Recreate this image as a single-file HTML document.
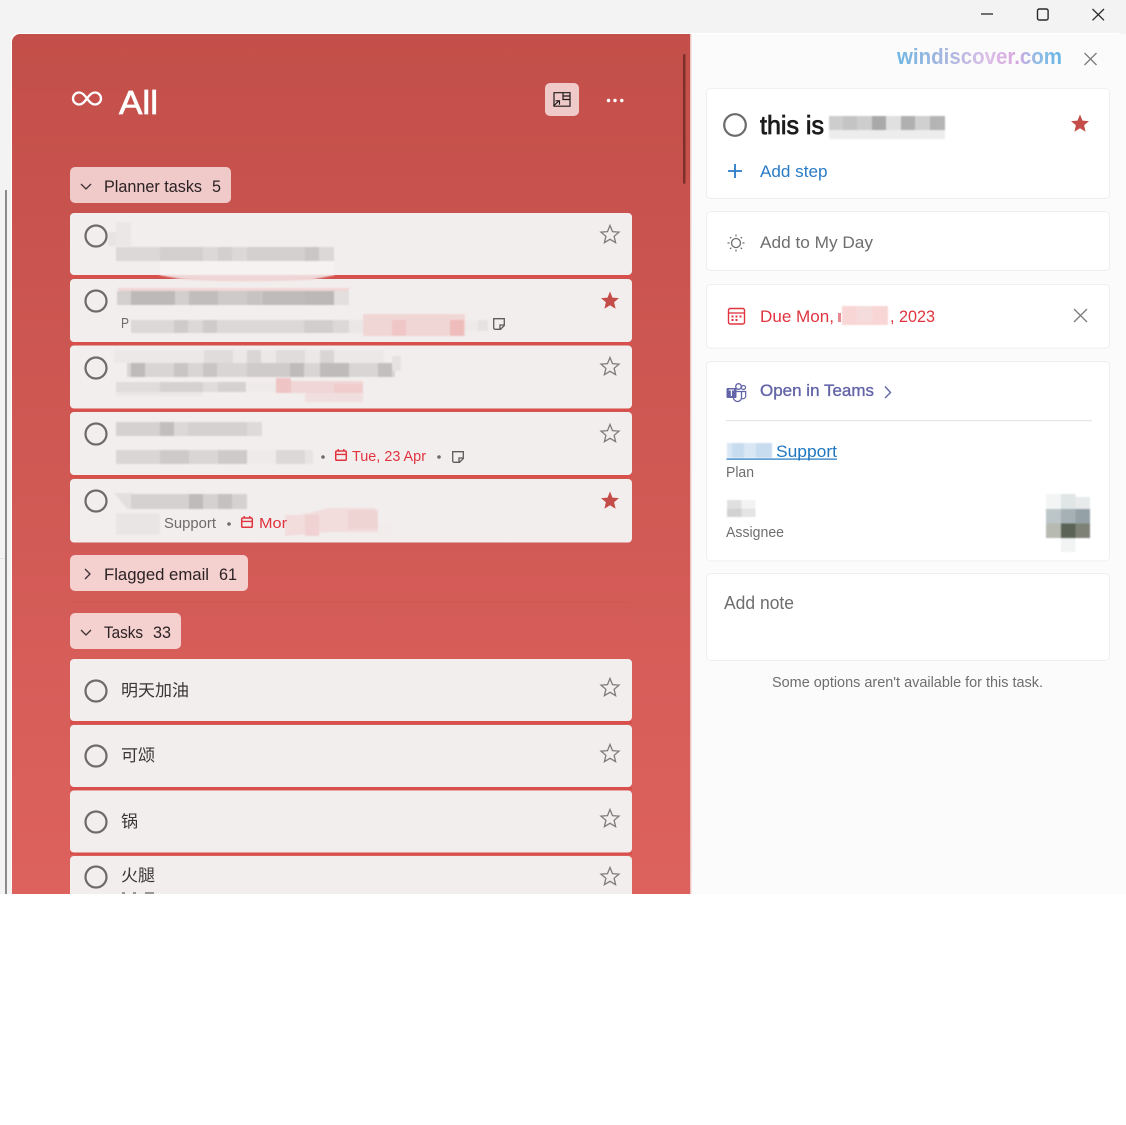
<!DOCTYPE html>
<html lang="en">
<head>
<meta charset="utf-8">
<title>All - Tasks</title>
<style>
html,body{margin:0;padding:0;width:1126px;height:1125px;overflow:hidden;background:#fff}
svg{display:block;position:absolute;left:0;top:0;filter:blur(.35px)}
text{font-family:"Liberation Sans","Noto Sans CJK SC",sans-serif}
.ph{font-size:16.5px;fill:#2b2224}
.sub{font-size:14.5px;fill:#6f6b6b}
.red{fill:#e0343f}
.grey{fill:#6e6e6e}
.cjk{font-size:16.5px;fill:#3a3536}
.mos{filter:blur(.7px)}
</style>
</head>
<body>
<svg width="1126" height="1125" viewBox="0 0 1126 1125" xmlns="http://www.w3.org/2000/svg">
<defs>
<linearGradient id="bg" x1="0" y1="34" x2="0" y2="894" gradientUnits="userSpaceOnUse"><stop offset="0" stop-color="#c34f4a"/><stop offset="1" stop-color="#dd625e"/></linearGradient>
<linearGradient id="wm" x1="897" y1="0" x2="1062" y2="0" gradientUnits="userSpaceOnUse"><stop offset="0" stop-color="#6fb6e2"/><stop offset=".3" stop-color="#a9b6df"/><stop offset=".55" stop-color="#dcc0e8"/><stop offset=".72" stop-color="#d9a6e0"/><stop offset=".85" stop-color="#90bce6"/><stop offset="1" stop-color="#66b6e4"/></linearGradient>
<path id="star" d="M0-9.500 2.500-3.400 9-2.900 4.100 1.300 5.600 7.700 0 4.300-5.600 7.700-4.100 1.300-9-2.900-2.500-3.400Z"/>
<g id="cal"><rect x=".7" y="2" width="10.600" height="9.300" rx="1.200" fill="none" stroke="#e0343f" stroke-width="1.500"/><path d="M.7 5.400H11.300M3.200 0V2.400M8.800 0V2.400" stroke="#e0343f" stroke-width="1.400" fill="none"/></g>
<path id="note" d="M.7.7H11.300V7.500L7.500 11.300H2A1.300 1.300 0 0 1 .7 10ZM11.300 7H7V11.300" fill="none" stroke="#5f5b5b" stroke-width="1.300"/>
</defs>

<!-- window background -->
<rect width="1126" height="894" fill="#f3f3f3"/>
<rect x="5" y="190" width="2" height="704" fill="#8b8b8b"/>
<rect x="0" y="558" width="5" height="1" fill="#e4e4e4"/>
<rect x="11" y="33" width="1115" height="861" rx="8" fill="#fff"/>
<path d="M12 42a8 8 0 0 1 8-8H691V894H12Z" fill="url(#bg)"/>
<rect x="691" y="34" width="435" height="860" fill="#fbfbfb"/>
<rect x="690" y="34" width="1.400" height="860" fill="#ecc4c4"/>

<!-- window controls -->
<path d="M981 14H993" stroke="#2a2a2a" stroke-width="1.300"/>
<rect x="1037.500" y="9" width="10.600" height="11" rx="1.800" fill="none" stroke="#2a2a2a" stroke-width="1.400"/>
<path d="M1092.500 9 1104 20.300M1104 9 1092.500 20.300" stroke="#2a2a2a" stroke-width="1.300"/>

<!-- header -->
<path d="M87 98.500C84 94.500 82 92.500 79 92.500A6 6 0 0 0 79 104.500C82 104.500 84 102.500 87 98.500C90 94.500 92 92.500 95 92.500A6 6 0 0 1 95 104.500C92 104.500 90 102.500 87 98.500Z" fill="none" stroke="#fff" stroke-width="2.300"/>
<text x="119" y="114" font-size="33" fill="#fff" stroke="#fff" stroke-width=".7" textLength="39" lengthAdjust="spacingAndGlyphs">All</text>
<rect x="545" y="83" width="34" height="33" rx="5" fill="#f0c9c9"/>
<path d="M554 92.700H570V106.200H554ZM563 92.700V99.500H570M563 96H570" fill="none" stroke="#1f1a1a" stroke-width="1.200"/>
<path d="M553.500 106 559 100.800M555.500 100.800H559.500V104.800" fill="none" stroke="#1f1a1a" stroke-width="1.100"/>
<g fill="#fff"><circle cx="608.500" cy="100.500" r="1.700"/><circle cx="615" cy="100.500" r="1.700"/><circle cx="621.800" cy="100.500" r="1.700"/></g>
<rect x="683" y="54" width="2.500" height="130" rx="1.200" fill="#7d2f2c"/>

<!-- section pills -->
<rect x="70" y="167" width="161" height="36" rx="5" fill="#f0c9c9"/>
<path d="M81 184 86 189 91 184" fill="none" stroke="#3b3031" stroke-width="1.300"/>
<text x="104" y="192" class="ph" textLength="98" lengthAdjust="spacingAndGlyphs">Planner tasks</text>
<text x="212" y="192" class="ph" textLength="9" lengthAdjust="spacingAndGlyphs">5</text>

<rect x="70" y="555" width="178" height="36" rx="5" fill="#f4d0cf"/>
<path d="M85 569 90 574 85 579" fill="none" stroke="#3b3031" stroke-width="1.300"/>
<text x="104" y="580" class="ph" textLength="105" lengthAdjust="spacingAndGlyphs">Flagged email</text>
<text x="219" y="580" class="ph" textLength="18" lengthAdjust="spacingAndGlyphs">61</text>
<rect x="71" y="602" width="559" height="1" fill="#c95a56"/>

<rect x="70" y="613" width="111" height="36" rx="5" fill="#f4d0cf"/>
<path d="M81 630 86 635 91 630" fill="none" stroke="#3b3031" stroke-width="1.300"/>
<text x="104" y="638" class="ph" textLength="39" lengthAdjust="spacingAndGlyphs">Tasks</text>
<text x="153" y="638" class="ph" textLength="18" lengthAdjust="spacingAndGlyphs">33</text>

<!-- task cards: red separators then cards -->
<g fill="#d94f4b">
<rect x="70" y="275" width="562" height="3"/><rect x="70" y="342" width="562" height="3"/><rect x="70" y="408" width="562" height="3"/><rect x="70" y="475" width="562" height="3"/>
<rect x="70" y="721" width="562" height="3"/><rect x="70" y="787" width="562" height="3"/><rect x="70" y="852" width="562" height="3"/>
</g>
<g fill="#f3eeee">
<rect x="70" y="213" width="562" height="62" rx="4"/>
<rect x="70" y="279" width="562" height="63" rx="4"/>
<rect x="70" y="345.500" width="562" height="63" rx="4"/>
<rect x="70" y="412" width="562" height="63" rx="4"/>
<rect x="70" y="479" width="562" height="63.500" rx="4"/>
<rect x="70" y="659" width="562" height="62" rx="4"/>
<rect x="70" y="725" width="562" height="62" rx="4"/>
<rect x="70" y="790.500" width="562" height="62" rx="4"/>
<path d="M70 894V860a4 4 0 0 1 4-4H628a4 4 0 0 1 4 4V894Z"/>
</g>

<g class="mos">
<!-- mosaics: card 1 -->
<rect x="108" y="232" width="8" height="14" fill="#e8e4e4"/><rect x="116" y="222" width="15" height="24" fill="#ebe7e7"/>
<rect x="116" y="247" width="218" height="14" fill="#dcd8d8"/>
<g fill="#d3cfcf"><rect x="160" y="247" width="43" height="14"/><rect x="218" y="247" width="14" height="14"/><rect x="247" y="247" width="58" height="14"/></g>
<rect x="305" y="247" width="14" height="14" fill="#cbc6c6"/>
<rect x="160" y="261" width="174" height="14" fill="#f6f2f2"/>
<path d="M158 275H336L310 280C260 282 190 282 175 278Z" fill="#efd5d5"/>
<!-- card 2 -->
<path d="M117 288H350L348 291.500H120Z" fill="#f1d5d5"/>
<rect x="117" y="291" width="232" height="14" fill="#e3dfdf"/>
<rect x="117" y="291" width="14" height="14" fill="#d3cfcf"/>
<rect x="131" y="291" width="44" height="14" fill="#bdb9b9"/>
<rect x="175" y="291" width="14" height="14" fill="#d3cfcf"/>
<rect x="189" y="291" width="29" height="14" fill="#c1bdbd"/>
<rect x="218" y="291" width="29" height="14" fill="#cecaca"/>
<rect x="247" y="291" width="14" height="14" fill="#c7c3c3"/>
<rect x="261" y="291" width="14" height="14" fill="#d0cccc"/>
<rect x="262" y="291" width="43" height="14" fill="#bfbbbb"/>
<rect x="305" y="291" width="29" height="14" fill="#bcb8b8"/>
<rect x="131" y="320" width="219" height="13" fill="#dcd8d8"/>
<rect x="174" y="320" width="14" height="13" fill="#cfcbcb"/><rect x="203" y="320" width="14" height="13" fill="#cfcbcb"/><rect x="304" y="320" width="29" height="13" fill="#d2cece"/>
<rect x="349" y="320" width="14" height="13" fill="#ebe7e7"/>
<rect x="363" y="314" width="102" height="22" fill="#f1d6d6"/>
<rect x="392" y="320" width="14" height="16" fill="#f0c6c6"/><rect x="450" y="320" width="14" height="16" fill="#efbcbc"/>
<rect x="465" y="320" width="14" height="11" fill="#efeaea"/><rect x="478" y="320" width="10" height="11" fill="#e6e2e2"/>
<!-- card 3 -->
<rect x="114" y="350" width="270" height="13" fill="#ece8e8"/>
<rect x="204" y="350" width="29" height="13" fill="#e0dcdc"/><rect x="247" y="350" width="14" height="13" fill="#dad6d6"/><rect x="276" y="350" width="29" height="13" fill="#e0dcdc"/><rect x="320" y="350" width="14" height="13" fill="#d9d5d5"/>
<rect x="127" y="363" width="268" height="14" fill="#d9d5d5"/>
<rect x="131" y="363" width="14" height="14" fill="#bebaba"/>
<rect x="174" y="363" width="14" height="14" fill="#c9c5c5"/><rect x="203" y="363" width="14" height="14" fill="#c9c5c5"/>
<rect x="247" y="363" width="43" height="14" fill="#cfcbcb"/>
<rect x="290" y="363" width="14" height="14" fill="#bfbbbb"/>
<rect x="320" y="363" width="29" height="14" fill="#bfbbbb"/>
<rect x="378" y="363" width="14" height="14" fill="#c3bfbf"/>
<rect x="392" y="356" width="9" height="15" fill="#e6e2e2"/>
<rect x="116" y="382" width="130" height="10" fill="#e0dcdc"/>
<rect x="160" y="382" width="43" height="10" fill="#d5d1d1"/><rect x="218" y="382" width="28" height="10" fill="#d5d1d1"/>
<rect x="116" y="392" width="87" height="4" fill="#ebe7e7"/>
<rect x="247" y="382" width="29" height="10" fill="#efeaea"/>
<rect x="276" y="378" width="15" height="15" fill="#efc4c4"/>
<rect x="291" y="381" width="72" height="12" fill="#f0d6d6"/><rect x="334" y="384" width="29" height="9" fill="#f0cccc"/>
<rect x="305" y="393" width="58" height="9" fill="#f1dfdf"/>
<!-- card 4 -->
<rect x="116" y="422" width="146" height="14" fill="#d5d1d1"/>
<rect x="160" y="422" width="14" height="14" fill="#c2bebe"/><rect x="174" y="422" width="14" height="14" fill="#dcd8d8"/><rect x="247" y="422" width="15" height="14" fill="#dedada"/>
<rect x="116" y="450" width="131" height="14" fill="#dad6d6"/>
<rect x="160" y="450" width="29" height="14" fill="#cecaca"/><rect x="218" y="450" width="29" height="14" fill="#cecaca"/>
<rect x="247" y="450" width="29" height="14" fill="#efeaea"/>
<rect x="276" y="450" width="29" height="14" fill="#dcd8d8"/><rect x="305" y="450" width="8" height="14" fill="#e8e4e4"/>
<!-- card 5 -->
<path d="M114 493H131V509H127Z" fill="#e3dfdf"/>
<rect x="131" y="494" width="116" height="15" fill="#d5d1d1"/>
<rect x="189" y="494" width="14" height="15" fill="#bfbbbb"/><rect x="218" y="494" width="14" height="15" fill="#c5c1c1"/>
<rect x="116" y="513" width="44" height="22" fill="#e9e5e5"/>
<path d="M285 515H300L330 508H375L378 532H330L285 536Z" fill="#f2dcdc"/>
<rect x="305" y="515" width="14" height="21" fill="#f0d2d2"/><rect x="348" y="510" width="30" height="19" fill="#efd4d4"/>
<rect x="378" y="525" width="15" height="10" fill="#f2ecec"/>
</g>

<!-- task circles -->
<g fill="none" stroke="#6e6a6a" stroke-width="2.200">
<circle cx="96" cy="236" r="10.500"/><circle cx="96" cy="301" r="10.500"/><circle cx="96" cy="368" r="10.500"/><circle cx="96" cy="434" r="10.500"/><circle cx="96" cy="501" r="10.500"/>
<circle cx="96" cy="691" r="10.500"/><circle cx="96" cy="756" r="10.500"/><circle cx="96" cy="822" r="10.500"/><circle cx="96" cy="877" r="10.500"/>
</g>

<!-- stars -->
<g fill="none" stroke="#7f7b7b" stroke-width="1.300">
<use href="#star" x="610" y="235"/><use href="#star" x="610" y="367"/><use href="#star" x="610" y="434"/><use href="#star" x="610" y="688"/><use href="#star" x="610" y="754"/><use href="#star" x="610" y="819"/><use href="#star" x="610" y="877"/>
</g>
<g fill="#c44d4a"><use href="#star" x="610" y="301"/><use href="#star" x="610" y="501"/></g>

<!-- task meta -->
<text x="121" y="328" class="sub" textLength="8" lengthAdjust="spacingAndGlyphs">P</text>
<use href="#note" x="493" y="318"/>
<circle cx="323" cy="457" r="1.800" fill="#6f6b6b"/>
<use href="#cal" x="335" y="449"/>
<text x="352" y="461" class="sub red" textLength="74" lengthAdjust="spacingAndGlyphs">Tue, 23 Apr</text>
<circle cx="439" cy="457" r="1.800" fill="#6f6b6b"/>
<use href="#note" x="452" y="451"/>
<text x="164" y="528" class="sub" textLength="52" lengthAdjust="spacingAndGlyphs">Support</text>
<circle cx="229" cy="524" r="1.800" fill="#6f6b6b"/>
<use href="#cal" x="241" y="516"/>
<text x="259" y="528" class="sub red" textLength="28" lengthAdjust="spacingAndGlyphs">Mor</text>

<!-- Chinese tasks -->
<text x="121" y="696" class="cjk" textLength="68" lengthAdjust="spacingAndGlyphs">明天加油</text>
<text x="121" y="761" class="cjk" textLength="34" lengthAdjust="spacingAndGlyphs">可颂</text>
<text x="121" y="827" class="cjk" textLength="17" lengthAdjust="spacingAndGlyphs">锅</text>
<text x="121" y="881" class="cjk" textLength="34" lengthAdjust="spacingAndGlyphs">火腿</text>
<g fill="#9a9696"><rect x="122" y="892" width="3" height="2"/><rect x="133" y="892" width="3" height="2"/><rect x="145" y="892" width="9" height="2"/></g>

<!-- detail pane -->
<text x="897" y="64" font-size="22" font-weight="700" fill="url(#wm)" textLength="165" lengthAdjust="spacingAndGlyphs">windiscover.com</text>
<path d="M1084.500 53 1096.500 65M1096.500 53 1084.500 65" stroke="#7c7c7c" stroke-width="1.300"/>

<g fill="#fff" stroke="#efefef">
<rect x="706.500" y="88.500" width="403" height="110" rx="4"/>
<rect x="706.500" y="211.500" width="403" height="59" rx="4"/>
<rect x="706.500" y="284.500" width="403" height="63.500" rx="4"/>
<rect x="706.500" y="361.500" width="403" height="199.500" rx="4"/>
<rect x="706.500" y="573.500" width="403" height="87" rx="4"/>
</g>

<circle cx="735" cy="125" r="10.800" fill="none" stroke="#6a6a6a" stroke-width="2.200"/>
<text x="760" y="134" font-size="26" fill="#1c1c1c" stroke="#1c1c1c" stroke-width=".8" textLength="64" lengthAdjust="spacingAndGlyphs">this is</text>
<g class="mos">
<rect x="829" y="116" width="116" height="14" fill="#cdcdcd"/>
<rect x="843" y="116" width="14" height="14" fill="#c4c4c4"/><rect x="872" y="116" width="14" height="14" fill="#a9a9a9"/><rect x="886" y="116" width="15" height="14" fill="#e0e0e0"/><rect x="901" y="116" width="14" height="14" fill="#b0b0b0"/><rect x="915" y="116" width="15" height="14" fill="#d0d0d0"/><rect x="930" y="116" width="15" height="14" fill="#b4b4b4"/>
<rect x="829" y="130" width="116" height="9" fill="#ededed"/>
</g>
<use href="#star" x="1080" y="124" fill="#c44d4a"/>
<path d="M735 164V178M728 171H742" stroke="#2a7ac6" stroke-width="1.800"/>
<text x="760" y="177" font-size="17" fill="#2a7ac6" textLength="67.500" lengthAdjust="spacingAndGlyphs">Add step</text>

<circle cx="736" cy="243" r="4.500" fill="none" stroke="#6e6e6e" stroke-width="1.300"/>
<path d="M736 234.500V236.500M736 249.500V251.500M727.500 243H729.500M742.500 243H744.500M730 237 731.300 238.300M740.700 247.700 742 249M730 249 731.300 247.700M740.700 238.300 742 237" stroke="#6e6e6e" stroke-width="1.200"/>
<text x="760" y="248" font-size="17" class="grey" textLength="113" lengthAdjust="spacingAndGlyphs">Add to My Day</text>

<rect x="728.500" y="308.500" width="16" height="15.500" rx="1.800" fill="none" stroke="#e0343f" stroke-width="1.400"/>
<path d="M728.500 313H744.500" stroke="#e0343f" stroke-width="1.300"/>
<g fill="#e0343f"><rect x="731.500" y="315.500" width="2" height="2"/><rect x="735.500" y="315.500" width="2" height="2"/><rect x="739.500" y="315.500" width="2" height="2"/><rect x="731.500" y="319" width="2" height="2"/><rect x="735.500" y="319" width="2" height="2"/></g>
<text x="760" y="322" font-size="17" class="red" textLength="74" lengthAdjust="spacingAndGlyphs">Due Mon,</text>
<rect x="838" y="313" width="3" height="9" fill="#e58a90"/>
<g class="mos"><rect x="842" y="306" width="46" height="19" fill="#f8d6d6"/>
<rect x="857" y="306" width="15" height="16" fill="#f5dcdc"/></g>
<text x="890" y="322" font-size="17" class="red" textLength="45" lengthAdjust="spacingAndGlyphs">, 2023</text>
<path d="M1074 309 1087 322M1087 309 1074 322" stroke="#7c7c7c" stroke-width="1.300"/>

<!-- Teams -->
<g fill="#6264a7">
<rect x="726.500" y="388" width="10" height="10" rx="1"/>
<circle cx="738.500" cy="386.500" r="2.800" fill="none" stroke="#6264a7" stroke-width="1.300"/>
<circle cx="743.500" cy="387.500" r="2" fill="none" stroke="#6264a7" stroke-width="1.200"/>
<path d="M733.500 391.500H741.500V397.500A4 4 0 0 1 733.500 397.500Z" fill="none" stroke="#6264a7" stroke-width="1.300"/>
<path d="M741.500 391.500H745.700V396.500A3 3 0 0 1 741.500 398.500" fill="none" stroke="#6264a7" stroke-width="1.200"/>
</g>
<path d="M728.800 390H734M731.400 390V396" stroke="#fff" stroke-width="1.100"/>
<text x="760" y="396" font-size="17" fill="#6264a7" stroke="#6264a7" stroke-width=".35" textLength="114" lengthAdjust="spacingAndGlyphs">Open in Teams</text>
<path d="M885 386.500 890.500 392.500 885 398" fill="none" stroke="#6264a7" stroke-width="1.400"/>
<rect x="726" y="420" width="366" height="1.200" fill="#e6e6e6"/>

<g class="mos"><rect x="727" y="443" width="45" height="15" fill="#d9e7f4"/><rect x="732" y="443" width="12" height="15" fill="#c8dcef"/><rect x="756" y="443" width="16" height="15" fill="#c8dcef"/></g>
<text x="776" y="457" font-size="16.500" fill="#1f77c0" textLength="61" lengthAdjust="spacingAndGlyphs">Support</text>
<rect x="726.500" y="458.500" width="110.500" height="1.200" fill="#1f77c0"/>
<text x="726" y="477" font-size="14.500" fill="#6e6e6e" textLength="28" lengthAdjust="spacingAndGlyphs">Plan</text>
<g class="mos"><rect x="727" y="500" width="14.500" height="8.500" fill="#e0e0e0"/><rect x="741.500" y="500" width="14" height="8.500" fill="#f3f3f3"/>
<rect x="727" y="508.500" width="14.500" height="8.500" fill="#d2d2d2"/><rect x="741.500" y="508.500" width="14" height="8.500" fill="#e4e4e4"/></g>
<text x="726" y="537" font-size="14.500" fill="#6e6e6e" textLength="58" lengthAdjust="spacingAndGlyphs">Assignee</text>
<!-- avatar -->
<g class="mos">
<rect x="1046" y="494" width="15" height="15" fill="#f3f5f5"/><rect x="1061" y="494" width="14.500" height="15" fill="#e0e5e6"/><rect x="1075.500" y="497" width="14.500" height="12" fill="#e8ebeb"/>
<rect x="1046" y="509" width="15" height="14.500" fill="#bcc5c7"/><rect x="1061" y="509" width="14.500" height="14.500" fill="#a5b1b5"/><rect x="1075.500" y="509" width="14.500" height="14.500" fill="#94a1a6"/>
<rect x="1046" y="523.500" width="15" height="14.500" fill="#b6bab0"/><rect x="1061" y="523.500" width="14.500" height="14.500" fill="#5a6355"/><rect x="1075.500" y="523.500" width="14.500" height="14.500" fill="#7e8276"/>
<rect x="1061" y="538" width="14.500" height="14" fill="#f2f3f3"/>
</g>

<text x="724" y="609" font-size="18" class="grey" textLength="70" lengthAdjust="spacingAndGlyphs">Add note</text>
<text x="772" y="687" font-size="14.500" fill="#6e6e6e" textLength="271" lengthAdjust="spacingAndGlyphs">Some options aren't available for this task.</text>
</svg>
</body>
</html>
